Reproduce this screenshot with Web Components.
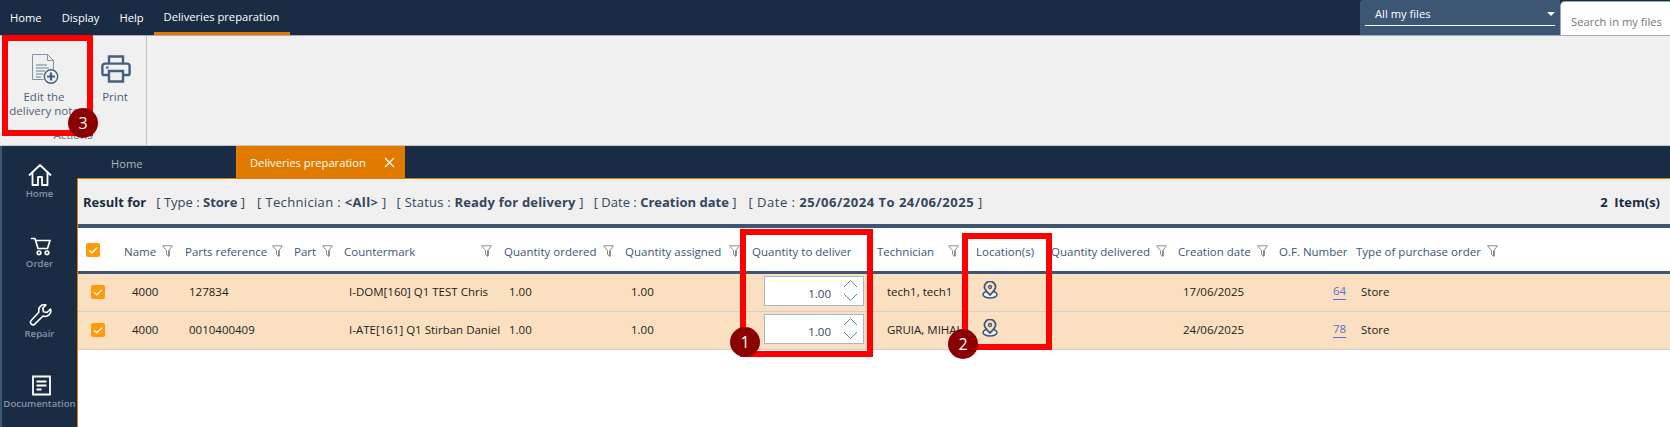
<!DOCTYPE html>
<html>
<head>
<meta charset="utf-8">
<title>Deliveries preparation</title>
<style>
  html, body { margin: 0; height: 427px; overflow: hidden; background: #fff; }
  body { font: 11.5px "Open Sans", "Noto Sans", sans-serif; position: relative; }
  app-shell { width: 1670px; height: 427px; }
</style>
</head>
<body>
<app-shell>
  <menu-bar></menu-bar>
  <ribbon-bar></ribbon-bar>
  <main-area></main-area>
</app-shell>

<!-- the red marks were painted over the screenshot, so they sit on a free canvas -->
<note-box style="left:2px;top:35px;width:91px;height:101px" num="3" cx="81" cy="88"></note-box>
<note-box style="left:740px;top:229px;width:133px;height:128px" num="1" cx="5" cy="113"></note-box>
<note-box style="left:962px;top:233px;width:90px;height:117px" num="2" cx="1" cy="111"></note-box>

<script>
const NAVY = '#1a2c43';
const STEEL = '#3c5674';
const ORANGE = '#e07b00';

class AppShell extends HTMLElement {
    constructor(){
        super();
        let shadow = this.attachShadow({mode: 'open'});
        shadow.innerHTML = `
        <style>
            :host { display: flex; flex-direction: column; }
        </style>
        <slot></slot>`;
    }
}
customElements.define('app-shell', AppShell);

class MenuBar extends HTMLElement {
    constructor(){
        super();
        let shadow = this.attachShadow({mode: 'open'});
        shadow.innerHTML = `
        <style>
            :host { display: flex; height: 36px; background: ${NAVY}; color: #fff; flex: none; box-sizing: border-box; border-bottom: 1px solid #aab; }
            a { display: flex; align-items: center; padding: 0 10px; height: 35px; font-size: 11.2px; white-space: nowrap; }
            a:first-child { padding-left: 7px; }
            a.on { border-bottom: 3px solid ${ORANGE}; height: 32px; width: 116px; }
            .space { flex: 1; }
            .select { width: 200px; background: ${STEEL}; padding: 0 5px; box-sizing: border-box; border-radius: 3px 0 0 0; font-size: 11.2px; }
            .select div { height: 26px; border-bottom: 1px solid #fff; padding: 2px 0 0 10px; box-sizing: border-box; display: flex; align-items: center; justify-content: space-between; }
            .select i { width: 0; height: 0; border: 4px solid transparent; border-top: 4px solid #fff; border-bottom: 0; }
            .search { width: 110px; background: #fff; color: #777; padding: 12px 0 0 10px; box-sizing: border-box; border-radius: 5px 0 0 0; margin-top: 1px; height: 34px; white-space: nowrap; overflow: hidden; border-top: 1px solid #9aa8b8; border-left: 1px solid #9aa8b8; font-size: 11.2px; }
        </style>
        <a>Home</a><a>Display</a><a>Help</a><a class="on">Deliveries preparation</a>
        <span class="space"></span>
        <span class="select"><div>All my files<i></i></div></span>
        <span class="search">Search in my files</span>`;
    }
}
customElements.define('menu-bar', MenuBar);

class RibbonBar extends HTMLElement {
    constructor(){
        super();
        let shadow = this.attachShadow({mode: 'open'});
        shadow.innerHTML = `
        <style>
            :host { display: flex; height: 110px; background: #f0f0f0; flex: none; box-sizing: border-box; border-bottom: 1px solid #c8c8c8; }
            .group { width: 147px; box-sizing: border-box; border-right: 1px solid #c4c4c4; display: flex; flex-direction: column; }
            .btns { display: flex; padding-left: 4px; flex: 1; }
            .label { text-align: center; color: #5a6b80; font-size: 11.5px; padding: 0 0 2px; height: 16px; }
        </style>
        <div class="group">
            <div class="btns">
                <ribbon-button style="width:80px" label="Edit the&#10;delivery note">
                    <svg width="30" height="30" viewBox="0 0 30 30" fill="none" stroke="#44607f" stroke-width="1">
                        <path d="M3.500 .5h15l6 6v9M3.500 .5v25h11" stroke="#7f92a8"/><path d="M18.500 .5v6h6" stroke="#7f92a8"/>
                        <path d="M7 11h11M7 14h13M7 17h9M7 20h7M7 23h5" stroke="#6d829b" stroke-width="1.200"/>
                        <circle cx="22" cy="22.500" r="6.700" fill="#f0f0f0" stroke-width="1.400"/>
                        <path d="M22 18.500v8M18 22.500h8" stroke-width="2.200"/>
                    </svg>
                </ribbon-button>
                <ribbon-button style="width:62px" label="Print">
                    <svg width="30" height="30" viewBox="0 0 30 30" fill="none" stroke="#44607f" stroke-width="2.400" style="margin-left:2px">
                        <path d="M8 10V2.500h14V10"/>
                        <path d="M7.500 21H3a1.600 1.600 0 0 1-1.600-1.600V12A2.400 2.400 0 0 1 3.800 9.600h22.400A2.400 2.400 0 0 1 28.600 12v7.400A1.600 1.600 0 0 1 27 21h-4.500"/>
                        <path d="M8 17h14v10.500H8z"/>
                        <path d="M5 13.500h2.500" stroke-width="2"/>
                    </svg>
                </ribbon-button>
            </div>
            <div class="label">Actions</div>
        </div>`;
    }
}
customElements.define('ribbon-bar', RibbonBar);

class RibbonButton extends HTMLElement {
    constructor(){
        super();
        let shadow = this.attachShadow({mode: 'open'});
        shadow.innerHTML = `
        <style>
            :host { display: flex; flex-direction: column; align-items: center; padding-top: 18px; box-sizing: border-box; color: #4e6179; font-size: 11.5px; line-height: 14px; text-align: center; }
            span { white-space: pre-line; margin-top: 6px; }
            ::slotted(svg) { display: block; }
        </style>
        <slot></slot><span></span>`;
        shadow.querySelector('span').textContent = this.getAttribute('label');
    }
}
customElements.define('ribbon-button', RibbonButton);

class MainArea extends HTMLElement {
    constructor(){
        super();
        let shadow = this.attachShadow({mode: 'open'});
        shadow.innerHTML = `
        <style>
            :host { display: flex; flex: 1; min-height: 0; background: ${NAVY}; }
            .right { flex: 1; display: flex; flex-direction: column; min-width: 0; }
            .content { flex: 1; background: #fff; border-top: 1px solid ${ORANGE}; border-left: 1px solid ${ORANGE}; display: flex; flex-direction: column; min-height: 0; }
        </style>
        <side-nav></side-nav>
        <div class="right">
            <tab-strip></tab-strip>
            <div class="content">
                <result-bar></result-bar>
                <data-grid></data-grid>
            </div>
        </div>`;
    }
}
customElements.define('main-area', MainArea);

class SideNav extends HTMLElement {
    constructor(){
        super();
        let shadow = this.attachShadow({mode: 'open'});
        shadow.innerHTML = `
        <style>
            :host { display: flex; flex-direction: column; width: 77px; box-sizing: border-box; border-left: 2px solid ${STEEL}; padding-top: 18px; flex: none; overflow: hidden; }
            div { height: 70px; flex: none; display: flex; flex-direction: column; align-items: center; color: #8593a5; font-size: 9.600px; line-height: 13px; font-weight: 600; white-space: nowrap; }
            svg { display: block; margin-bottom: 1px; }
        </style>
        <div>
            <svg width="24" height="22" viewBox="0 0 24 22" fill="none" stroke="#fff" stroke-width="1.800" stroke-linejoin="round" stroke-linecap="round">
                <path d="M1.500 11 12 1l10.500 10M4.500 8.500V21h5.500v-8h4v8h5.500V8.500"/>
            </svg>
            Home
        </div>
        <div>
            <svg width="24" height="22" viewBox="0 0 24 22" fill="none" stroke="#fff" stroke-width="1.700" stroke-linejoin="round" stroke-linecap="round">
                <path d="M3.500 4.500H7l3 10h9.500l2.500-8H7.500"/>
                <circle cx="11" cy="18.800" r="1.800"/><circle cx="19" cy="18.800" r="1.800"/>
            </svg>
            Order
        </div>
        <div>
            <svg width="24" height="22" viewBox="0 0 24 22" fill="none" stroke="#fff" stroke-width="1.600" stroke-linejoin="round" stroke-linecap="round">
                <path d="M22.500 5 19 8.500l-3.500-.8-.8-3.400L18 1A5.600 5.600 0 0 0 11 8L3.200 16.500a2.500 2.500 0 0 0 3.800 3.400L15 12a5.600 5.600 0 0 0 7.500-7z"/>
            </svg>
            Repair
        </div>
        <div>
            <svg width="24" height="22" viewBox="0 0 24 22" fill="none" stroke="#fff" stroke-width="1.800">
                <path d="M5 2.500h17v18H5z"/>
                <path d="M8.500 7.500h10M8.500 11.500h10M8.500 15.500h5"/>
            </svg>
            Documentation
        </div>`;
    }
}
customElements.define('side-nav', SideNav);

class TabStrip extends HTMLElement {
    constructor(){
        super();
        let shadow = this.attachShadow({mode: 'open'});
        shadow.innerHTML = `
        <style>
            :host { display: flex; height: 32px; flex: none; font-size: 11.2px; }
            .home { width: 159px; box-sizing: border-box; padding-left: 34px; display: flex; align-items: center; color: #a9b3bf; padding-top: 2px; }
            .active { width: 169px; box-sizing: border-box; background: ${ORANGE}; color: #fff; display: flex; align-items: center; justify-content: space-between; padding: 0 10px 0 14px; }
            svg { display: block; }
        </style>
        <div class="home">Home</div>
        <div class="active">Deliveries preparation
            <svg width="11" height="11" viewBox="0 0 11 11" stroke="#fff" stroke-width="1.200"><path d="M1 1l9 9M10 1l-9 9"/></svg>
        </div>`;
    }
}
customElements.define('tab-strip', TabStrip);

class ResultBar extends HTMLElement {
    constructor(){
        super();
        let shadow = this.attachShadow({mode: 'open'});
        shadow.innerHTML = `
        <style>
            :host { display: flex; align-items: center; height: 45px; background: #f0f0f0; color: ${NAVY}; padding: 1px 10px 0 5px; box-sizing: border-box; flex: none; font-size: 13px; white-space: nowrap; }
            b { font-weight: 700; }
            span { color: #33465e; margin-right: 10px; }
            .r { margin-right: 10px; color: ${NAVY}; }
            .items { margin: 0 0 0 auto; font-weight: 700; color: ${NAVY}; }
        </style>
        <b class="r">Result for</b>
        <span style="margin-right:12px">[ Type : <b>Store</b> ]</span>
        <span style="letter-spacing:.35px">[ Technician : <b>&lt;All&gt;</b> ]</span>
        <span style="letter-spacing:.2px">[ Status : <b>Ready for delivery</b> ]</span>
        <span style="margin-right:12px">[ Date : <b>Creation date</b> ]</span>
        <span style="letter-spacing:.5px">[ Date : <b>25/06/2024 To 24/06/2025</b> ]</span>
        <span class="items">2&nbsp; Item(s)</span>`;
    }
}
customElements.define('result-bar', ResultBar);

class CheckMark extends HTMLElement {
    constructor(){
        super();
        let shadow = this.attachShadow({mode: 'open'});
        shadow.innerHTML = `
        <style>
            :host { display: block; width: 14px; height: 14px; background: #ff9a0a; border-radius: 2px; }
            svg { display: block; }
        </style>
        <svg width="14" height="14" viewBox="0 0 14 14" fill="none" stroke="#fff" stroke-width="1.300"><path d="M3 7.200l2.800 2.600L11 4.800"/></svg>`;
    }
}
customElements.define('check-mark', CheckMark);

class FilterIcon extends HTMLElement {
    constructor(){
        super();
        let shadow = this.attachShadow({mode: 'open'});
        shadow.innerHTML = `
        <style>
            :host { display: inline-block; width: 11px; height: 12px; flex: none; }
            svg { display: block; }
        </style>
        <svg width="11" height="12" viewBox="0 0 11 12" fill="none" stroke="#8a8a8a" stroke-width="1">
            <path d="M.5 .8h10L6.800 5.500v6L4.500 9.500v-4z"/><path d="M7 5.500v5.500" stroke-width="1.800"/>
        </svg>`;
    }
}
customElements.define('filter-icon', FilterIcon);

class LocationIcon extends HTMLElement {
    constructor(){
        super();
        let shadow = this.attachShadow({mode: 'open'});
        shadow.innerHTML = `
        <style>
            :host { display: block; width: 16px; height: 18px; margin-bottom: 3px; }
            svg { display: block; }
        </style>
        <svg width="16" height="18" viewBox="0 0 16 18" fill="none" stroke="#3c5674" stroke-width="1.700">
            <ellipse cx="8" cy="13.500" rx="7" ry="3.500" fill="#eef2f6" stroke-width="1.500"/>
            <path d="M8 14C5 11 2.400 8.500 2.400 6a5.600 5.600 0 0 1 11.200 0C13.600 8.500 11 11 8 14z" fill="#fadfc0"/>
            <circle cx="8" cy="6" r="1.500" stroke-width="1.300"/>
        </svg>`;
    }
}
customElements.define('location-icon', LocationIcon);

class QtyInput extends HTMLElement {
    constructor(){
        super();
        let shadow = this.attachShadow({mode: 'open'});
        shadow.innerHTML = `
        <style>
            :host { display: flex; width: 100px; height: 30px; box-sizing: border-box; background: #fff; border: 1px solid #a9b6cb; color: #33465e; position: relative; margin-bottom: 2px; }
            .val { width: 66px; text-align: right; line-height: 30px; padding-top: 2px; box-sizing: border-box; }
            svg { position: absolute; right: 5px; top: 2px; display: block; }
        </style>
        <div class="val"><slot></slot></div>
        <svg width="15" height="23" viewBox="0 0 15 23" fill="none" stroke="#6d829b" stroke-width="1"><path d="M1 8 7.500 1.500 14 8M1 15l6.500 6.500L14 15"/></svg>`;
    }
}
customElements.define('qty-input', QtyInput);

const COLS = '40px 61px 109px 50px 160px 121px 127px 125px 99px 75px 127px 101px 77px 1fr';

// second value is the distance from the start of the title to its filter icon
const HEADERS = [
    ['Name', 38], ['Parts reference', 87], ['Part', 28], ['Countermark', 137], ['Quantity ordered', 99],
    ['Quantity assigned', 104], ['Quantity to deliver', 0], ['Technician', 71], ['Location(s)', 0],
    ['Quantity delivered', 105], ['Creation date', 79], ['O.F. Number', 0], ['Type of purchase order', 131]
];

const ROWS = [
    ['4000', '127834', 'I-DOM[160] Q1 TEST Chris', 'tech1, tech1', '17/06/2025', '64'],
    ['4000', '0010400409', 'I-ATE[161] Q1 Stirban Daniel', 'GRUIA, MIHAI', '24/06/2025', '78']
];

class DataGrid extends HTMLElement {
    constructor(){
        super();
        let shadow = this.attachShadow({mode: 'open'});
        let head = HEADERS.map(([name, w]) => `
            <div class="h"><span class="t" style="${w ? 'width:' + w + 'px' : ''}">${name}</span>${w ? '<filter-icon></filter-icon>' : ''}</div>`).join('');
        let rows = ROWS.map(r => `
            <div class="row">
                <div class="c box"><check-mark></check-mark></div>
                <div class="c" style="padding-left:14px">${r[0]}</div>
                <div class="c" style="padding-left:10px">${r[1]}</div>
                <div class="c"></div>
                <div class="c" style="padding-left:11px">${r[2]}</div>
                <div class="c" style="padding-left:11px">1.00</div>
                <div class="c" style="padding-left:12px">1.00</div>
                <div class="c" style="padding-left:18px"><qty-input>1.00</qty-input></div>
                <div class="c" style="padding-left:16px">${r[3]}</div>
                <div class="c" style="padding-left:12px"><location-icon></location-icon></div>
                <div class="c"></div>
                <div class="c" style="padding-left:11px">${r[4]}</div>
                <div class="c" style="padding-left:60px"><a>${r[5]}</a></div>
                <div class="c" style="padding-left:11px">Store</div>
            </div>`).join('');
        shadow.innerHTML = `
        <style>
            :host { display: block; flex: 1; background: #fff; font-size: 11.5px; color: #222; border-top: 4px solid ${STEEL}; }
            .head, .row { display: grid; grid-template-columns: ${COLS}; }
            .head { height: 43px; border-bottom: 3px solid ${STEEL}; color: #3c5674; font-weight: 500; box-sizing: content-box; }
            .h { display: flex; align-items: center; padding: 3px 0 0 6px; white-space: nowrap; }
            .t { display: inline-block; flex: none; }
            .head .box { padding-left: 8px; display: flex; align-items: center; }
            .row { height: 38px; box-sizing: border-box; background: #fadfc0; border-bottom: 1px solid #cfcfcf; }
            .c { display: flex; align-items: center; white-space: nowrap; min-width: 0; padding-bottom: 2px; }
            .c.box { padding-left: 13px; }
            a { color: #5a6fd8; border-bottom: 1px solid #5a6fd8; padding-bottom: 1px; }
        </style>
        <div class="head"><div class="box"><check-mark></check-mark></div>${head}</div>
        ${rows}`;
    }
}
customElements.define('data-grid', DataGrid);

class NoteBox extends HTMLElement {
    constructor(){
        super();
        let shadow = this.attachShadow({mode: 'open'});
        shadow.innerHTML = `
        <style>
            :host { display: block; position: absolute; box-sizing: border-box; border: 6px solid #f00; }
            div { position: absolute; width: 30px; height: 30px; border-radius: 50%; background: #8b0000; color: #fff; font-size: 16px; line-height: 30px; text-align: center; transform: translate(-50%, -50%); }
        </style>
        <div></div>`;
        let dot = shadow.querySelector('div');
        dot.textContent = this.getAttribute('num');
        dot.style.left = (this.getAttribute('cx') - 6) + 'px';
        dot.style.top = (this.getAttribute('cy') - 6) + 'px';
    }
}
customElements.define('note-box', NoteBox);
</script>
</body>
</html>
